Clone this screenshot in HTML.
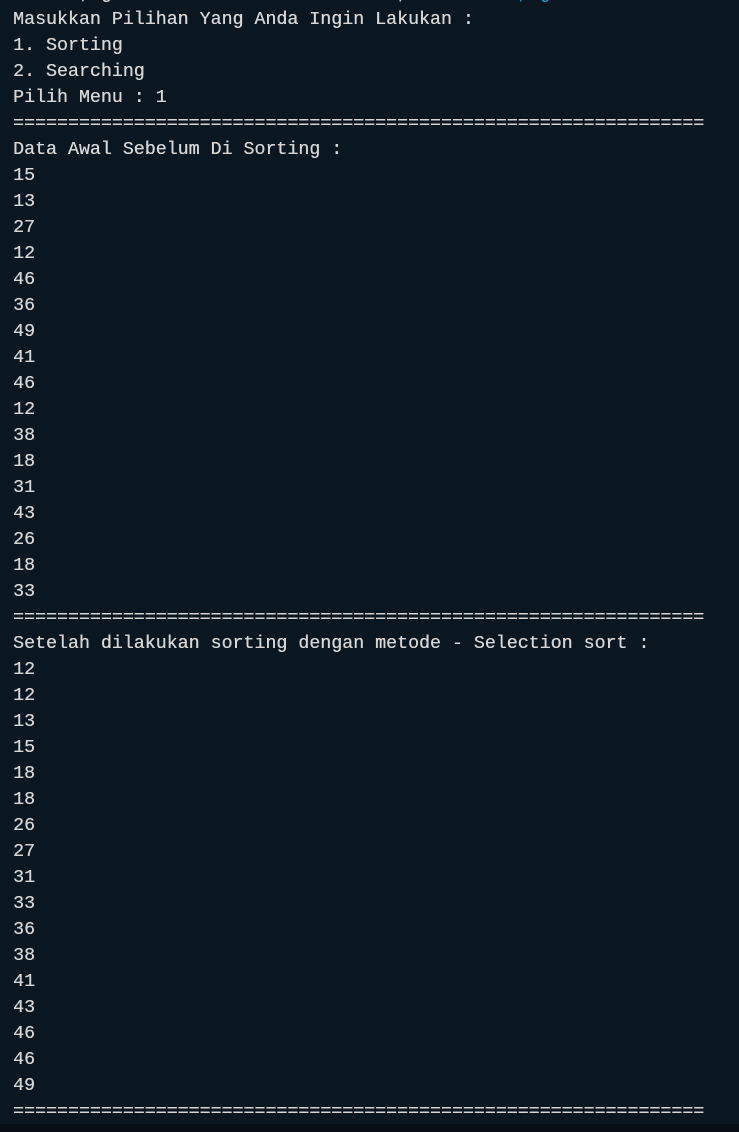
<!DOCTYPE html>
<html><head><meta charset="utf-8"><style>
html,body{margin:0;padding:0;}
body{width:739px;height:1132px;background:#0b1720;overflow:hidden;position:relative;}
pre{position:absolute;left:13px;top:-19px;margin:0;font-family:"Liberation Mono",monospace;font-size:18.3px;line-height:26px;color:#d6d6d6;text-shadow:0.3px 0 0 #d6d6d6;}
.c{color:#1e9fd6;text-shadow:none}
.bot{position:absolute;left:0;top:1124px;width:739px;height:8px;background:#080e14;}
</style></head><body>
<pre>      ; g                          ,          <span class="c">, g</span>
Masukkan Pilihan Yang Anda Ingin Lakukan :
1. Sorting
2. Searching
Pilih Menu : 1
===============================================================
Data Awal Sebelum Di Sorting :
15
13
27
12
46
36
49
41
46
12
38
18
31
43
26
18
33
===============================================================
Setelah dilakukan sorting dengan metode - Selection sort :
12
12
13
15
18
18
26
27
31
33
36
38
41
43
46
46
49
===============================================================</pre>
<div class="bot"></div>
</body></html>
